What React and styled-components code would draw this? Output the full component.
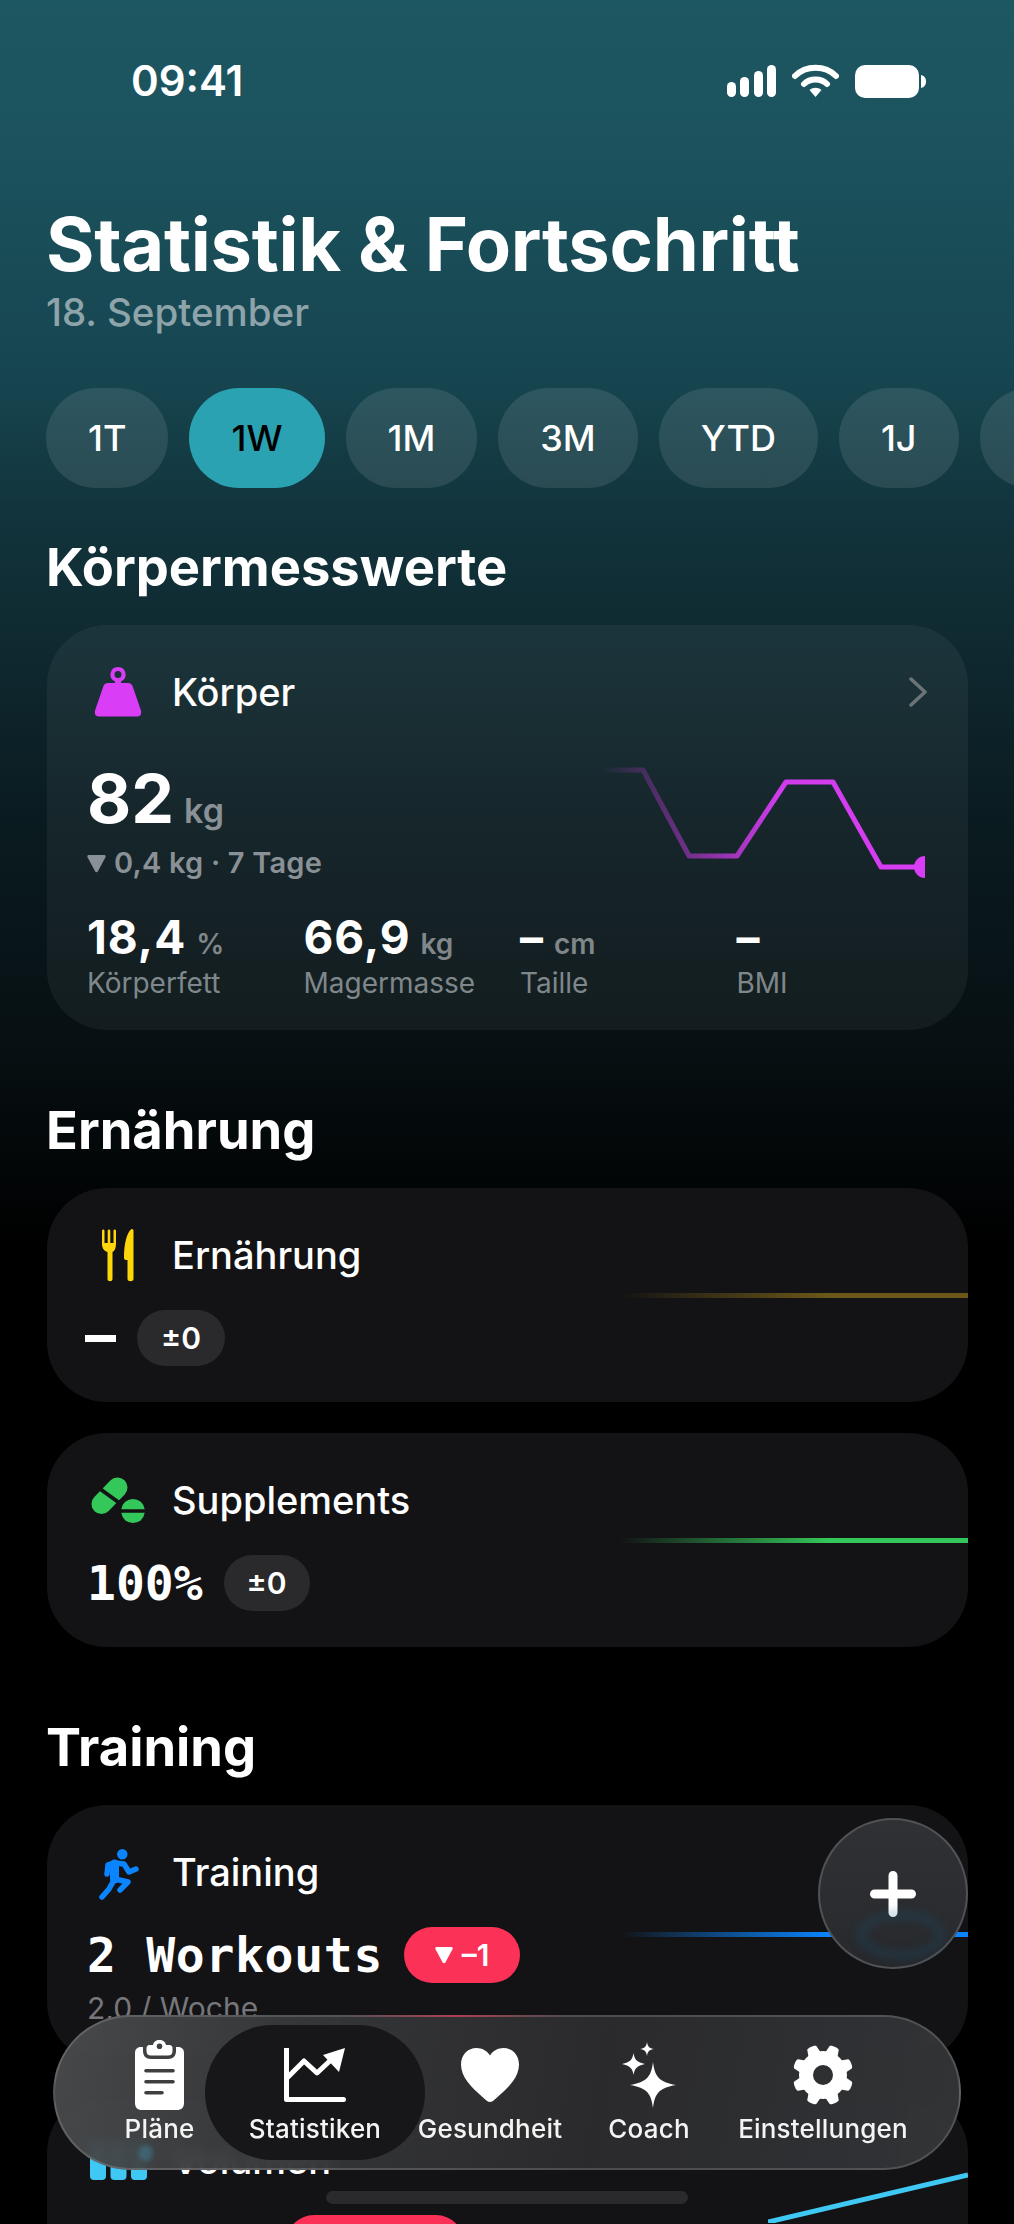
import React from 'react'
import styled, { createGlobalStyle } from 'styled-components'

const GlobalStyle = createGlobalStyle`
  html, body {
    margin: 0;
    padding: 0;
    background: #000;
  }
  * { box-sizing: border-box; }
`

const Page = styled.div`
  position: relative;
  width: 1014px;
  height: 2224px;
  overflow: hidden;
  color: #fff;
  font-family: Inter, "Liberation Sans", sans-serif;
  background: linear-gradient(180deg, #1d5762 0%, #1b525d 7%, #164550 17%, #12343c 23%, #0f2930 29%, #0a1b20 37%, #071013 47%, #000 56%, #000 100%);
`

const StatusBar = styled.div`
  display: flex;
  align-items: center;
  justify-content: space-between;
  height: 50px;
  margin-top: 56px;
  padding: 0 88px 0 131px;
`

const Time = styled.div`
  font-size: 42px;
  font-weight: 600;
  line-height: 50px;
`

const StatusIcons = styled.div`
  display: flex;
  align-items: center;
  gap: 16px;
`

const Header = styled.header`
  padding: 98px 46px 0;
`

const Title = styled.h1`
  margin: 0;
  font-size: 74px;
  font-weight: 700;
  line-height: 80px;
  letter-spacing: -0.3px;
`

const DateLine = styled.div`
  margin-top: 6px;
  font-size: 38.5px;
  font-weight: 500;
  line-height: 44px;
  color: #8ea4aa;
`

const RangeRow = styled.div`
  display: flex;
  gap: 21px;
  margin-top: 54px;
  padding-left: 46px;
  overflow: hidden;
`

const RangePill = styled.div`
  flex: none;
  min-width: 120px;
  height: 100px;
  padding: 0 42px;
  border-radius: 50px;
  font-size: 36px;
  font-weight: 500;
  line-height: 100px;
  background: ${p => (p.$active ? '#2aa2b2' : 'rgba(255, 255, 255, 0.1)')};
  color: ${p => (p.$active ? '#000' : '#fff')};
`

const Content = styled.main`
  padding: 0 46px 0 47px;
`

const SectionTitle = styled.h2`
  margin: ${p => p.$top}px 0 28px -1px;
  font-size: 52.5px;
  font-weight: 700;
  line-height: 60px;
`

const Card = styled.section`
  position: relative;
  display: flex;
  flex-direction: column;
  padding: 40px 40px ${p => p.$bottom}px;
  margin-bottom: ${p => p.$gap || 0}px;
  border-radius: 60px;
  overflow: hidden;
  background: ${p => (p.$tinted ? 'rgba(255, 255, 255, 0.052)' : '#131315')};
`

const CardHeader = styled.div`
  display: flex;
  align-items: center;
  gap: 23px;
  height: 54px;
`

const IconSlot = styled.div`
  display: flex;
  align-items: center;
  justify-content: center;
  flex: none;
  width: 62px;
  height: 62px;
`

const CardTitle = styled.div`
  flex: 1;
  font-size: 38px;
  font-weight: 500;
  line-height: 54px;
`

const BodyRow = styled.div`
  display: flex;
  justify-content: space-between;
  margin-top: 39px;
`

const BigValue = styled.div`
  display: flex;
  align-items: baseline;
  gap: 10px;
  font-size: 68px;
  font-weight: 700;
  line-height: 80px;
`

const BigUnit = styled.span`
  font-size: 34px;
  font-weight: 600;
  line-height: 1;
  color: #8a9196;
`

const Delta = styled.div`
  display: flex;
  align-items: center;
  gap: 8px;
  margin-top: 5px;
  font-size: 29px;
  font-weight: 600;
  line-height: 40px;
  letter-spacing: 0.2px;
  color: #8a9196;
`

const ChartSvg = styled.svg`
  flex: none;
  margin: -3px 3px 0 0;
`

const StatsGrid = styled.div`
  display: grid;
  grid-template-columns: repeat(4, 216.5px);
  margin-top: 27px;
`

const StatValue = styled.div`
  display: flex;
  align-items: baseline;
  gap: 10px;
  font-size: 46px;
  font-weight: 700;
  line-height: 50px;
  letter-spacing: 1px;
`

const StatUnit = styled.span`
  font-size: 28px;
  font-weight: 600;
  line-height: 1;
  letter-spacing: 0;
  color: #80878b;
`

const StatLabel = styled.div`
  margin-top: 2px;
  font-size: 28px;
  line-height: 38px;
  color: #7f878b;
`

const ValueRow = styled.div`
  display: flex;
  align-items: center;
  gap: ${p => p.$gap || 0}px;
  height: 56px;
  margin-top: 28px;
  padding-left: ${p => p.$indent || 0}px;
`

const MonoValue = styled.div`
  font-family: "DejaVu Sans Mono", "Liberation Mono", monospace;
  font-size: 48px;
  font-weight: 700;
  line-height: 56px;
  letter-spacing: ${p => p.$spacing || 0}px;
`

const DashValue = styled.div`
  width: 31px;
  height: 7px;
  margin-left: -2px;
  background: #fff;
`

const DeltaPill = styled.div`
  display: flex;
  align-items: center;
  justify-content: center;
  gap: 9px;
  flex: none;
  width: ${p => p.$width}px;
  height: 56px;
  border-radius: 28px;
  font-size: 30px;
  font-weight: 600;
  background: ${p => (p.$alert ? '#fb3157' : '#2a2a2c')};
`

const SubLine = styled.div`
  margin-top: 5px;
  font-size: 30px;
  line-height: 40px;
  color: #77777b;
`

const TrendLine = styled.div`
  position: absolute;
  top: ${p => p.$top}px;
  right: 0;
  width: 348px;
  height: 5px;
  background: linear-gradient(90deg, transparent 0%, ${p => p.$color} 60%, ${p => p.$color} 100%);
`

const VolumeLine = styled.svg`
  position: absolute;
  top: 70px;
  right: 0;
`

const Fab = styled.div`
  position: absolute;
  top: 1818px;
  left: 818px;
  display: flex;
  align-items: center;
  justify-content: center;
  width: 150px;
  height: 151px;
  border: 2px solid #505255;
  border-radius: 50%;
  background: linear-gradient(180deg, #2f3134 0%, #2a2c2f 70%, #26282b 100%);
  &:after {
    content: '';
    position: absolute;
    left: 37px;
    bottom: 8px;
    width: 72px;
    height: 32px;
    border: 8px solid rgba(20, 85, 125, 0.28);
    border-radius: 50%;
    filter: blur(4px);
  }
`

const Nav = styled.nav`
  position: absolute;
  top: 2015px;
  left: 53px;
  width: 908px;
  height: 155px;
  border-radius: 78px;
  border: 2px solid rgba(255, 255, 255, 0.16);
  background: linear-gradient(100deg, rgba(74, 76, 78, 0.94) 0%, rgba(56, 57, 59, 0.95) 25%, rgba(44, 44, 46, 0.96) 60%, rgba(52, 54, 56, 0.95) 100%);
  backdrop-filter: blur(6px);
  &:before {
    content: '';
    position: absolute;
    top: -2px;
    left: 290px;
    width: 220px;
    height: 2px;
    background: linear-gradient(90deg, transparent, rgba(251, 49, 87, 0.55), transparent);
  }
  &:after {
    content: '';
    position: absolute;
    top: 128px;
    left: 84px;
    width: 14px;
    height: 16px;
    border-radius: 7px;
    background: rgba(64, 200, 245, 0.22);
    filter: blur(2px);
  }
`

const ActiveBubble = styled.div`
  position: absolute;
  top: 8px;
  left: 150px;
  width: 220px;
  height: 135px;
  border-radius: 68px;
  background: #171719;
`

const NavRow = styled.div`
  position: relative;
  display: flex;
  height: 100%;
  padding-left: 29px;
`

const NavItem = styled.div`
  display: flex;
  flex-direction: column;
  align-items: center;
  flex: none;
  width: ${p => p.$width}px;
`

const NavIconBox = styled.div`
  display: flex;
  align-items: center;
  justify-content: center;
  height: 76px;
  margin-top: 20px;
`

const NavLabel = styled.div`
  margin-top: 1px;
  font-size: 26px;
  font-weight: 500;
  line-height: 30px;
  letter-spacing: 0.2px;
  white-space: nowrap;
  color: #f4f4f4;
`

const HomeBar = styled.div`
  position: absolute;
  top: 2191px;
  left: 326px;
  width: 362px;
  height: 13px;
  border-radius: 7px;
  background: #2a2a2c;
`

const SignalIcon = () => (
  <svg width="49" height="33" viewBox="0 0 49 33" fill="#fff">
    <rect x="0" y="17" width="9" height="15" rx="4.5" />
    <rect x="13" y="12" width="9" height="20" rx="4.5" />
    <rect x="27" y="6" width="9" height="26" rx="4.5" />
    <rect x="40" y="0" width="9" height="32" rx="4.5" />
  </svg>
)

const WifiIcon = () => (
  <svg width="47" height="34" viewBox="0 0 47 34" fill="none" stroke="#fff" strokeWidth="6" strokeLinecap="round">
    <path d="M3 12 C14 1 33 1 44 12" />
    <path d="M12 20 C18 14 29 14 35 20" />
    <path d="M17.5 26 L23.5 33 L29.5 26 C26 23 21 23 17.5 26 Z" fill="#fff" stroke="none" />
  </svg>
)

const BatteryIcon = () => (
  <svg width="71" height="33" viewBox="0 0 71 33" fill="#fff">
    <rect x="0" y="0" width="64" height="33" rx="10" />
    <path d="M66 10 C70 11 71 14 71 16.5 C71 19 70 22 66 23 Z" />
  </svg>
)

const WeightIcon = () => (
  <svg width="48" height="50" viewBox="0 0 48 50" fill="#d93df5">
    <path fillRule="evenodd" d="M24 0 a7.5 7.5 0 0 1 3 14.4 V16 H34 C36.5 16 38 17.2 38.7 19.5 L46.8 43 C48 47 46.4 49.5 43 49.5 H5 C1.6 49.5 0 47 1.2 43 L9.3 19.5 C10 17.2 11.5 16 14 16 H21 V14.4 A7.5 7.5 0 0 1 24 0 Z M24 4 a3.5 3.5 0 1 0 0 7 a3.5 3.5 0 0 0 0 -7 Z" />
  </svg>
)

const CutleryIcon = () => (
  <svg width="38" height="56" viewBox="20 8 38 56" fill="#ffd60a">
    <path d="M23 12 C23 10 25.5 10 25.5 12 V24 H28.7 V12 C28.7 10 31.3 10 31.3 12 V24 H34.5 V12 C34.5 10 37 10 37 12 V25 C37 29 35.5 32 33.5 33 V60 C33.5 63 28.5 63 28.5 60 V33 C25 32 23 29 23 25 Z" />
    <path d="M54.5 12 V60 C54.5 63 48.5 63 48.5 60 V41 H47 C45.5 41 45 40 45 38.5 C45 24 48 14 52 10.5 C53.5 9.5 54.5 10.5 54.5 12 Z" />
  </svg>
)

const PillsIcon = () => (
  <svg width="56" height="52" viewBox="10 10 56 52">
    <path d="M21.5 40 L37.5 23.5" stroke="#34c759" strokeWidth="20" strokeLinecap="round" />
    <path d="M19.5 24.5 L39.5 39" stroke="#131315" strokeWidth="4" />
    <path d="M41.3 45.2 A11.8 11.8 0 0 1 64.7 45.2 Z" fill="#34c759" />
    <path d="M41.3 48.8 A11.8 11.8 0 0 0 64.7 48.8 Z" fill="#34c759" />
  </svg>
)

const RunnerIcon = () => (
  <svg width="56" height="60" viewBox="10 0 56 60" fill="none" stroke="#0a84ff" strokeWidth="5.5" strokeLinecap="round" strokeLinejoin="round">
    <circle cx="42.3" cy="12.3" r="5.2" fill="#0a84ff" stroke="none" />
    <path d="M34.5 22 L34.5 37" strokeWidth="9" />
    <path d="M35 21 L44 22 L49 30 L56 27" />
    <path d="M35 21 L28 23 L27 32" />
    <path d="M35 37 L48 40 L40 48" />
    <path d="M34 38 L29 47 L22 55" />
  </svg>
)

const ClipboardIcon = () => (
  <svg width="49" height="70" viewBox="0 0 49 70" fill="#fff">
    <path fillRule="evenodd" d="M24.5 0 C28 0 30.5 2 31 5 H34.5 C36.5 5 37.5 6.5 37.5 8 V11 C37.5 14 36 15.5 33 15.5 H16 C13 15.5 11.5 14 11.5 11 V8 C11.5 6.5 12.5 5 14.5 5 H18 C18.5 2 21 0 24.5 0 Z M24.5 3.5 a2.8 2.8 0 1 0 0 5.6 a2.8 2.8 0 0 0 0 -5.6 Z" />
    <path fillRule="evenodd" d="M8 7 V11 C8 16 11 19 16 19 H33 C38 19 41 16 41 11 V7 H43 C47 7 49 9.5 49 13 V63 C49 67.5 46.5 70 42 70 H7 C2.5 70 0 67.5 0 63 V13 C0 9.5 2 7 6 7 Z M11 29 a1.8 1.8 0 0 0 0 3.6 H38 a1.8 1.8 0 0 0 0 -3.6 Z M11 40 a1.8 1.8 0 0 0 0 3.6 H38 a1.8 1.8 0 0 0 0 -3.6 Z M11 51 a1.8 1.8 0 0 0 0 3.6 H27 a1.8 1.8 0 0 0 0 -3.6 Z" />
  </svg>
)

const ChartIcon = () => (
  <svg width="62" height="54" viewBox="0 0 62 54" fill="none">
    <path d="M2.5 0 V51.5 H59.5" stroke="#fff" strokeWidth="5" strokeLinecap="round" strokeLinejoin="round" />
    <path d="M3 30 L20 13 L33 25 L50 9" stroke="#fff" strokeWidth="5" strokeLinejoin="round" />
    <path d="M39 7 L61 0 L55 24 Z" fill="#fff" />
  </svg>
)

const HeartIcon = () => (
  <svg width="58" height="54" viewBox="0 0 58 54" fill="#fff">
    <path d="M29 54 C27 54 25.5 52.7 22 49.5 C10 39 0 29 0 16.5 C0 6.5 7 0 15.5 0 C21 0 26 2.7 29 7.5 C32 2.7 37 0 42.5 0 C51 0 58 6.5 58 16.5 C58 29 48 39 36 49.5 C32.5 52.7 31 54 29 54 Z" />
  </svg>
)

const SparklesIcon = () => (
  <svg width="54" height="66" viewBox="0 0 54 66" fill="#fff">
    <path d="M25 0 C25.6 4.5 27.5 6.5 32 7 C27.5 7.6 25.6 9.5 25 14 C24.4 9.5 22.5 7.6 18 7 C22.5 6.5 24.4 4.5 25 0 Z" />
    <path d="M11.5 11 C12.5 17.5 15 20.5 23 22 C15 23.5 12.5 26.5 11.5 33 C10.5 26.5 8 23.5 0 22 C8 20.5 10.5 17.5 11.5 11 Z" />
    <path d="M31 20 C33 35 37 40 54 43 C37 46 33 51 31 66 C29 51 25 46 8 43 C25 40 29 35 31 20 Z" />
  </svg>
)

const GearIcon = () => (
  <svg width="62" height="62" viewBox="-31 -31 62 62" fill="#fff">
    {[0, 45, 90, 135, 180, 225, 270, 315].map(angle => (
      <path key={angle} d="M-6.5 -22 L-5 -29 C-4.5 -31 4.5 -31 5 -29 L6.5 -22 Z" transform={`rotate(${angle + 22.5})`} />
    ))}
    <path fillRule="evenodd" d="M0 -24 A24 24 0 1 1 0 24 A24 24 0 1 1 0 -24 Z M0 -10 A10 10 0 1 0 0 10 A10 10 0 1 0 0 -10 Z" />
  </svg>
)

const PlusIcon = () => (
  <svg width="46" height="46" viewBox="0 0 46 46" fill="none" stroke="#fff" strokeWidth="9" strokeLinecap="round">
    <path d="M23 4.5 V41.5 M4.5 23 H41.5" />
  </svg>
)

const DownTriangle = ({ color = 'currentColor', size = 19 }) => (
  <svg width={size} height={size} viewBox="0 0 17 17" fill={color}>
    <path d="M1.5 1 H15.5 C16.5 1 17 2 16.5 3 L9.8 15.5 C9.2 16.5 7.8 16.5 7.2 15.5 L.5 3 C0 2 .5 1 1.5 1 Z" />
  </svg>
)

const WeightChart = () => (
  <ChartSvg width="325" height="130" viewBox="0 0 325 130" fill="none">
    <defs>
      <linearGradient id="weightLine" x1="0" x2="325" y1="0" y2="0" gradientUnits="userSpaceOnUse">
        <stop offset="0" stopColor="#d93df5" stopOpacity="0" />
        <stop offset="0.55" stopColor="#d93df5" stopOpacity="0.95" />
        <stop offset="1" stopColor="#d93df5" />
      </linearGradient>
    </defs>
    <path d="M0 15 H43 L89 101 H137 L186 27 H233 L281 112 H325" stroke="url(#weightLine)" strokeWidth="5" strokeLinejoin="round" />
    <circle cx="325" cy="112" r="11" fill="#d93df5" />
  </ChartSvg>
)

// the last pill only peeks in at the right edge, no label is visible
const ranges = [
  { id: '1t', label: '1T' },
  { id: '1w', label: '1W', active: true },
  { id: '1m', label: '1M' },
  { id: '3m', label: '3M' },
  { id: 'ytd', label: 'YTD' },
  { id: '1j', label: '1J' },
  { id: 'more' },
]

const stats = [
  { value: '18,4', unit: '%', label: 'Körperfett' },
  { value: '66,9', unit: 'kg', label: 'Magermasse' },
  { value: '–', unit: 'cm', label: 'Taille' },
  { value: '–', label: 'BMI' },
]

const navItems = [
  { label: 'Pläne', width: 151, icon: <ClipboardIcon /> },
  { label: 'Statistiken', width: 160, icon: <ChartIcon /> },
  { label: 'Gesundheit', width: 190, icon: <HeartIcon /> },
  { label: 'Coach', width: 128, icon: <SparklesIcon /> },
  { label: 'Einstellungen', width: 220, icon: <GearIcon /> },
]

export default function App () {
  return (
    <Page>
      <GlobalStyle />
      <StatusBar>
        <Time>09:41</Time>
        <StatusIcons>
          <SignalIcon />
          <WifiIcon />
          <BatteryIcon />
        </StatusIcons>
      </StatusBar>

      <Header>
        <Title>Statistik &amp; Fortschritt</Title>
        <DateLine>18. September</DateLine>
      </Header>

      <RangeRow>
        {ranges.map(range => (
          <RangePill key={range.id} $active={range.active}>{range.label}</RangePill>
        ))}
      </RangeRow>

      <Content>
        <SectionTitle $top={49}>Körpermesswerte</SectionTitle>
        <Card $tinted $bottom={28}>
          <CardHeader>
            <IconSlot><WeightIcon /></IconSlot>
            <CardTitle>Körper</CardTitle>
            <svg width="20" height="30" viewBox="0 0 20 30" fill="none" stroke="#6d7478" strokeWidth="3.5" strokeLinecap="round" strokeLinejoin="round">
              <path d="M3 2 L17 15 L3 28" />
            </svg>
          </CardHeader>
          <BodyRow>
            <div>
              <BigValue>82<BigUnit>kg</BigUnit></BigValue>
              <Delta><DownTriangle />0,4 kg · 7 Tage</Delta>
            </div>
            <WeightChart />
          </BodyRow>
          <StatsGrid>
            {stats.map(stat => (
              <div key={stat.label}>
                <StatValue>{stat.value}{stat.unit && <StatUnit>{stat.unit}</StatUnit>}</StatValue>
                <StatLabel>{stat.label}</StatLabel>
              </div>
            ))}
          </StatsGrid>
        </Card>

        <SectionTitle $top={70}>Ernährung</SectionTitle>
        <Card $bottom={36} $gap={31}>
          <CardHeader>
            <IconSlot><CutleryIcon /></IconSlot>
            <CardTitle>Ernährung</CardTitle>
          </CardHeader>
          <TrendLine $top={105} $color="#6b5717" />
          <ValueRow $gap={21}>
            <DashValue />
            <DeltaPill $width={88}>±0</DeltaPill>
          </ValueRow>
        </Card>
        <Card $bottom={36}>
          <CardHeader>
            <IconSlot><PillsIcon /></IconSlot>
            <CardTitle>Supplements</CardTitle>
          </CardHeader>
          <TrendLine $top={105} $color="#34c759" />
          <ValueRow $gap={21}>
            <MonoValue>100%</MonoValue>
            <DeltaPill $width={86}>±0</DeltaPill>
          </ValueRow>
        </Card>

        <SectionTitle $top={70}>Training</SectionTitle>
        <Card $bottom={34} $gap={31}>
          <CardHeader>
            <IconSlot><RunnerIcon /></IconSlot>
            <CardTitle>Training</CardTitle>
          </CardHeader>
          <TrendLine $top={127} $color="#0a84ff" />
          <ValueRow $gap={21}>
            <MonoValue $spacing={0.7}>2 Workouts</MonoValue>
            <DeltaPill $width={116} $alert><DownTriangle color="#fff" size={18} />–1</DeltaPill>
          </ValueRow>
          <SubLine>2,0 / Woche</SubLine>
        </Card>
        <Card $bottom={39}>
          <CardHeader>
            <IconSlot>
              <svg width="57" height="40" viewBox="0 0 57 40" fill="#40c8f5">
                <rect x="0" y="0" width="16" height="40" rx="4" />
                <rect x="20.5" y="0" width="16" height="40" rx="4" />
                <rect x="41" y="0" width="16" height="40" rx="4" />
              </svg>
            </IconSlot>
            <CardTitle>Volumen</CardTitle>
          </CardHeader>
          <VolumeLine width="200" height="60" viewBox="0 0 200 60" fill="none" stroke="#40c8f5" strokeWidth="5">
            <path d="M0 59 L200 12" />
          </VolumeLine>
          <ValueRow $indent={199}>
            <DeltaPill $width={178} $alert />
          </ValueRow>
        </Card>
      </Content>

      <Fab><PlusIcon /></Fab>

      <Nav>
        <ActiveBubble />
        <NavRow>
          {navItems.map(item => (
            <NavItem key={item.label} $width={item.width}>
              <NavIconBox>{item.icon}</NavIconBox>
              <NavLabel>{item.label}</NavLabel>
            </NavItem>
          ))}
        </NavRow>
      </Nav>
      <HomeBar />
    </Page>
  )
}
